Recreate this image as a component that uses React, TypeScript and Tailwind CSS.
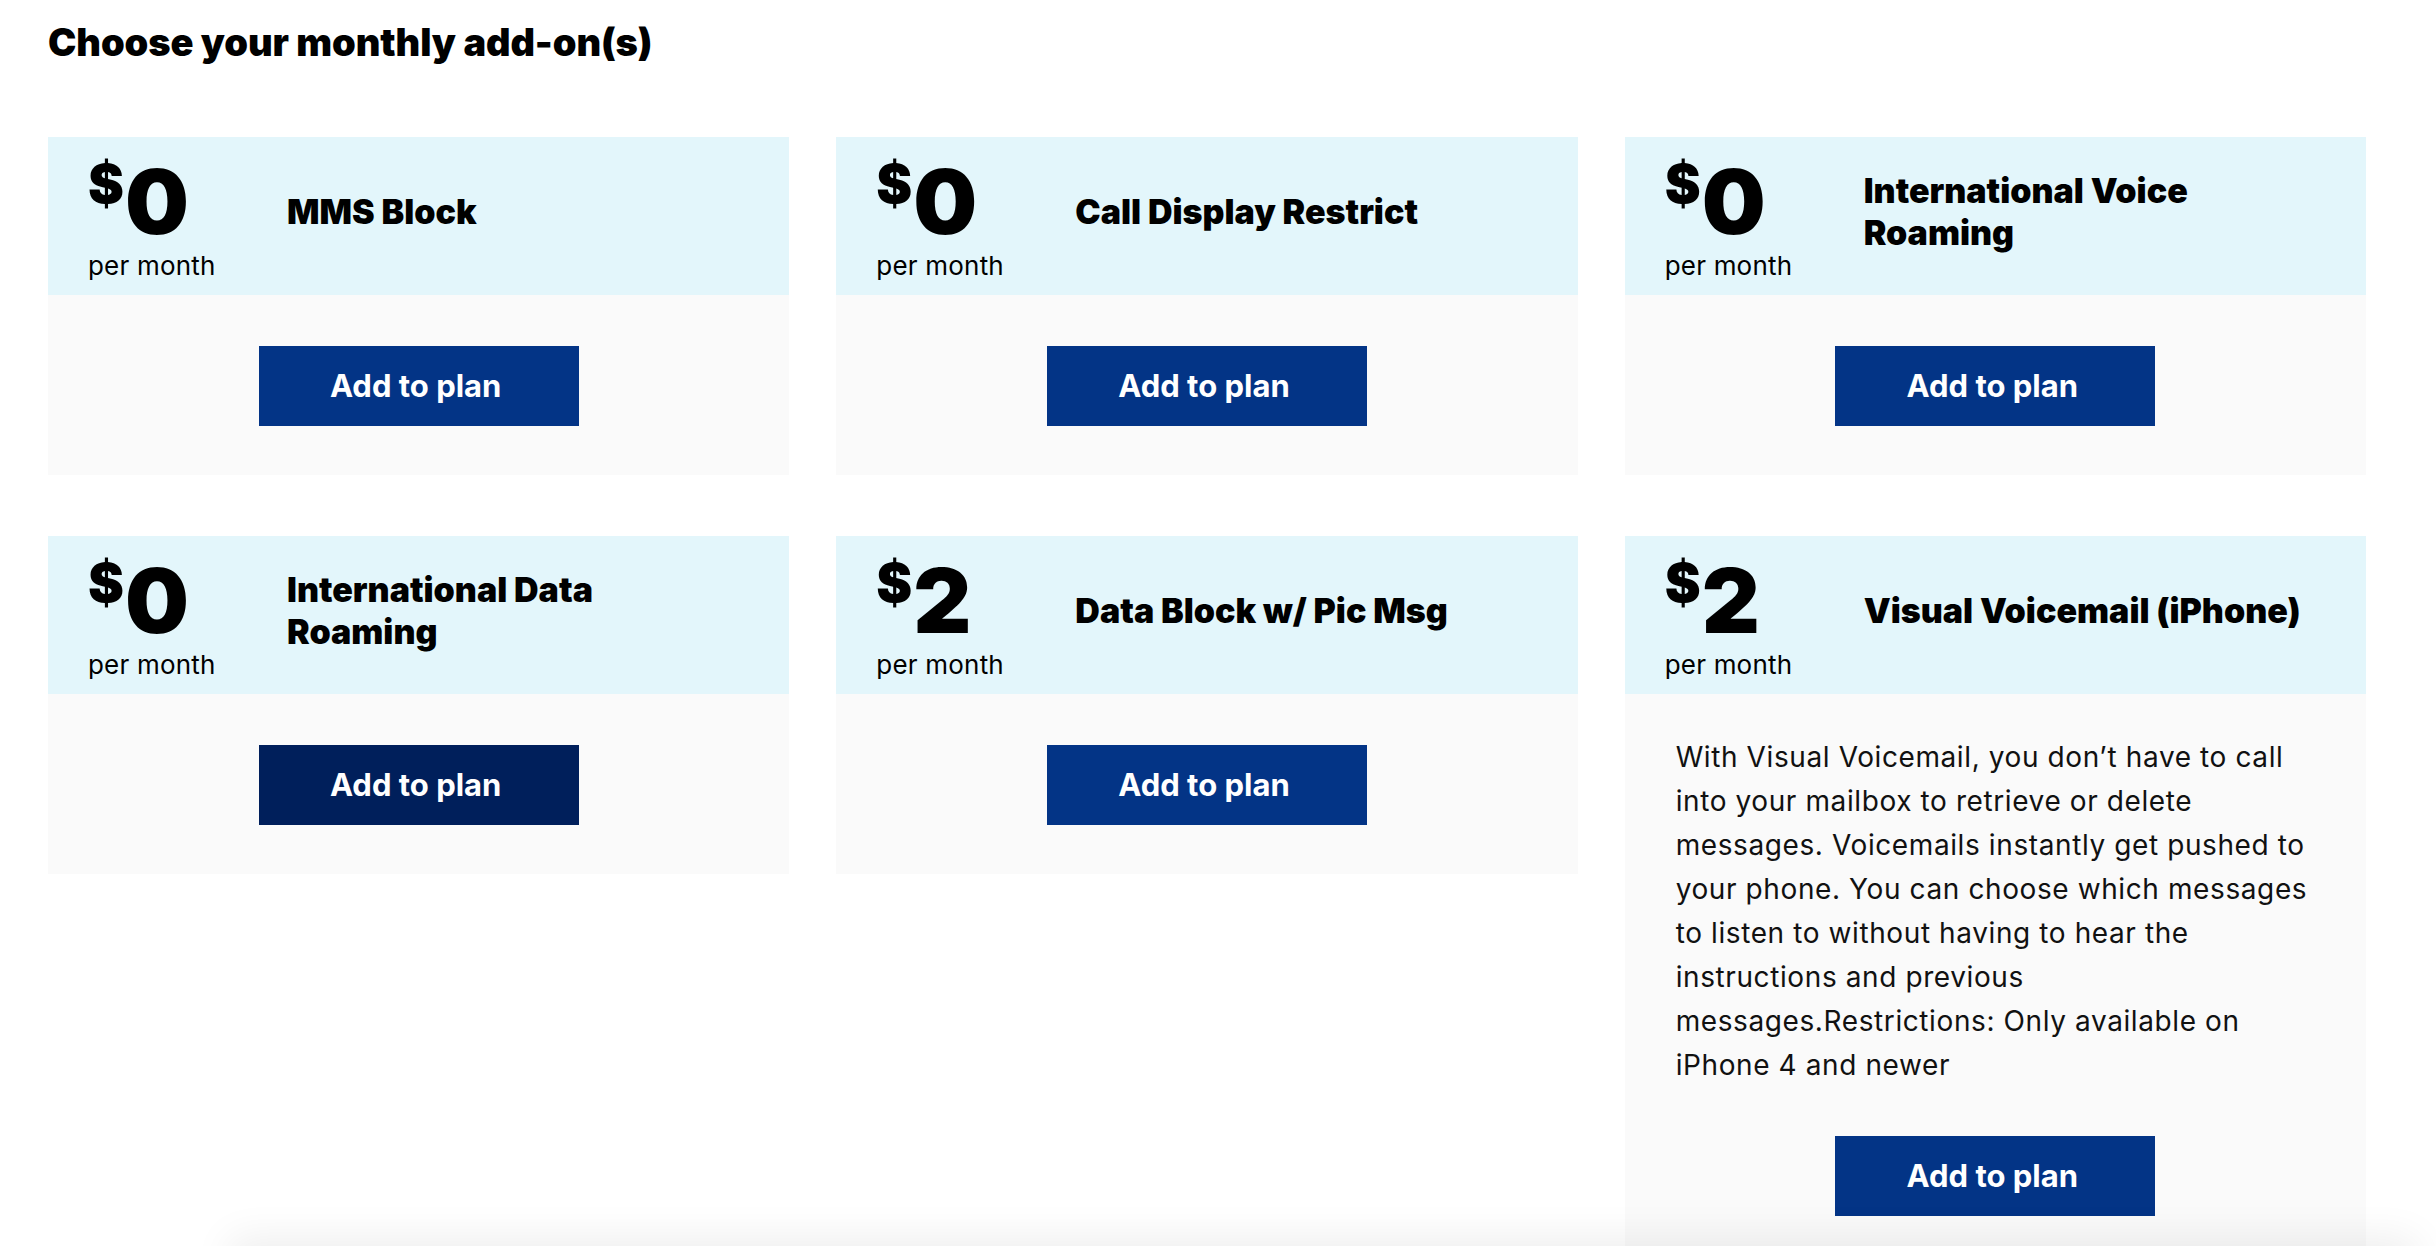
import React from 'react';

type AddOn = {
  id: string;
  price: string;
  name: string[];
  details?: string[];
  active?: boolean;
};

// Monthly add-ons offered on the plan
const addOns: AddOn[] = [
  { id: 'mms-block', price: '0', name: ['MMS Block'] },
  { id: 'call-display', price: '0', name: ['Call Display Restrict'] },
  { id: 'intl-voice', price: '0', name: ['International Voice', 'Roaming'] },
  { id: 'intl-data', price: '0', name: ['International Data', 'Roaming'], active: true },
  { id: 'data-block', price: '2', name: ['Data Block w/ Pic Msg'] },
  {
    id: 'visual-vm',
    price: '2',
    name: ['Visual Voicemail (iPhone)'],
    details: [
      'With Visual Voicemail, you don\u2019t have to call',
      'into your mailbox to retrieve or delete',
      'messages. Voicemails instantly get pushed to',
      'your phone. You can choose which messages',
      'to listen to without having to hear the',
      'instructions and previous',
      'messages.Restrictions: Only available on',
      'iPhone 4 and newer',
    ],
  },
];

const AddOnCard: React.FC<{ item: AddOn }> = ({ item }) => {
  return (
    <div className="flex flex-col">
      {/* Price + name */}
      <div className="flex h-[158px] bg-[#e3f6fb] pl-[40px]">
        <div className="flex w-[199px] shrink-0 flex-col pt-[19px]">
          <div className="flex items-start">
            <span className="mt-[1px] text-[54px] font-black leading-none">$</span>
            <span className="ml-[1px] text-[90px] font-black leading-[92px] tracking-[-1px]">{item.price}</span>
          </div>
          <span className="mt-[3px] text-[26px] leading-[30px] tracking-[0.2px]">per month</span>
        </div>
        <div className="mb-[9px] flex flex-col justify-center">
          {item.name.map((line) => (
            <span key={line} className="whitespace-nowrap text-[34px] font-black leading-[42px]">
              {line}
            </span>
          ))}
        </div>
      </div>

      {/* Details + action */}
      <div className={`flex flex-col bg-[#fafafa] px-[51px] pb-[49px] ${item.details ? 'pt-[41px]' : 'pt-[51px]'}`}>
        {item.details && (
          <p className="mb-[49px] text-[28px] leading-[44px] tracking-[0.6px] text-[#111]">
            {item.details.map((line) => (
              <span key={line} className="block whitespace-nowrap">
                {line}
              </span>
            ))}
          </p>
        )}
        <button
          className={`mx-auto h-[80px] w-[320px] pr-[6px] text-[31px] font-bold text-white ${
            item.active ? 'bg-[#001f5b]' : 'bg-[#033486]'
          }`}
        >
          Add to plan
        </button>
      </div>
    </div>
  );
};

const App: React.FC = () => {
  return (
    <div className="min-h-screen overflow-hidden bg-white pl-[48px] pr-[70px] text-black [font-family:Inter,'Noto_Sans',sans-serif]">
      <h1 className="pt-[20px] text-[38px] font-black leading-[44px] tracking-[-0.1px]">
        Choose your monthly add-on(s)
      </h1>

      <div className="mt-[73px] grid grid-cols-3 items-start gap-x-[47px] gap-y-[61px]">
        {addOns.map((item) => (
          <AddOnCard key={item.id} item={item} />
        ))}
      </div>

      {/* sticky summary bar sits just below the fold; only its shadow shows */}
      <div className="fixed left-[230px] right-[20px] top-[1246px] h-[60px] bg-white shadow-[0_-8px_40px_rgba(0,0,0,0.07)]" />
    </div>
  );
};

export default App;
